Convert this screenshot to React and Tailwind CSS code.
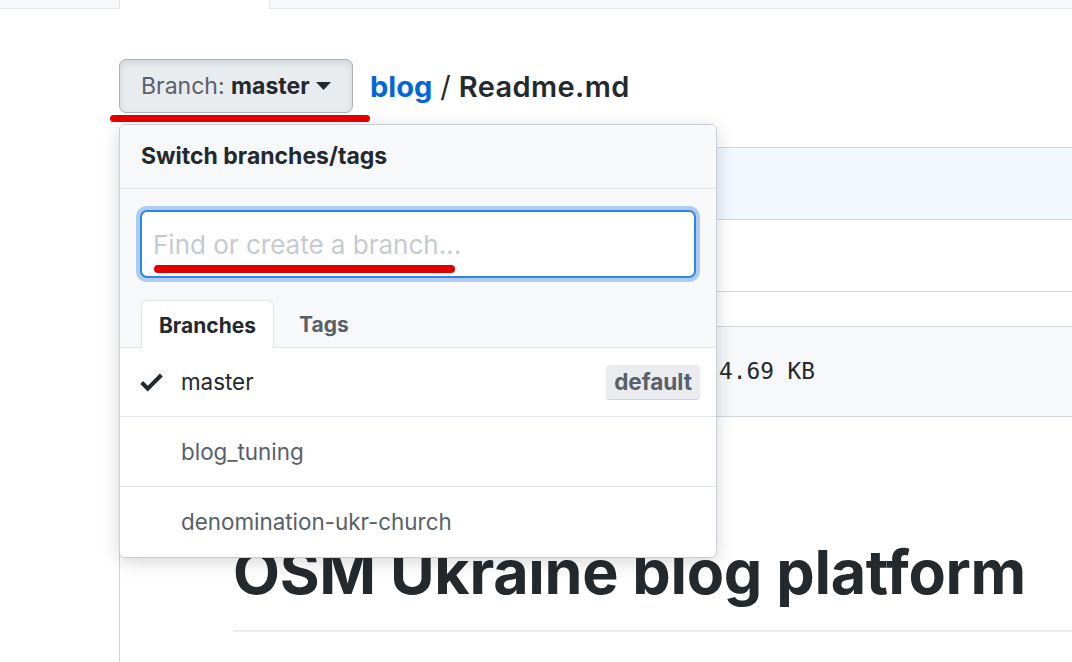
import React from "react";

function Caret() {
  return (
    <svg width="15" height="8" viewBox="0 0 15 8" className="ml-[6px]">
      <path d="M0 0h15L7.5 8z" fill="#24292e" />
    </svg>
  );
}

function Check() {
  return (
    <svg width="23" height="30" viewBox="0 0 12 16">
      <path d="M12 5l-8 8-4-4 1.5-1.5L4 10l6.5-6.5L12 5z" fill="#24292e" />
    </svg>
  );
}

export default function App() {
  const sans = "font-['Inter','Liberation_Sans',sans-serif]";
  return (
    <div className={`relative w-[1072px] h-[662px] overflow-hidden bg-white ${sans}`}>
      {/* top tab strip */}
      <div className="flex h-[9px]">
        <div className="w-[120px] bg-[#f6f8fa] border-b border-r border-[#e1e4e8]" />
        <div className="w-[149px]" />
        <div className="flex-1 bg-[#f6f8fa] border-b border-l border-[#e1e4e8]" />
      </div>

      {/* main column */}
      <div className="ml-[119px]">
        <div className="mt-[50px] flex items-center h-[54px]">
          <div className="flex items-center h-[54px] w-[234px] px-[21px] rounded-[7px] border border-[#aeb2b6] bg-[#e9ecef] shadow-[inset_0_3px_6px_rgba(27,31,35,0.12)] text-[23px]">
            <span className="text-[#586069]">Branch:&nbsp;</span>
            <span className="font-bold text-[#24292e]">master</span>
            <Caret />
          </div>
          <div className="ml-[17px] text-[29px] leading-none">
            <span className="font-bold text-[#0366d6]">blog</span>
            <span className="text-[#24292e] mx-[8px]">/</span>
            <span className="font-semibold text-[#24292e] tracking-[0.4px]">Readme.md</span>
          </div>
        </div>

        {/* commit tease box */}
        <div className="mt-[34px] border-y border-l border-[#d1d5da]">
          <div className="h-[72px] bg-[#f1f8ff] border-b border-[#d1d5da]" />
          <div className="h-[71px] bg-white" />
        </div>

        {/* file box */}
        <div className="mt-[34px] border-t border-l border-[#d1d5da] h-[400px]">
          <div className="h-[90px] bg-[#f6f8fa] border-b border-[#d1d5da] flex items-center pl-[599px] font-['DejaVu_Sans_Mono',monospace] text-[22.8px] text-[#24292e]">
            4.69 KB
          </div>
          <div className="pl-[113px] pt-[117px]">
            <h1 className="text-[61px] font-bold text-[#24292e] leading-[76px] pb-[20px] border-b-2 border-[#eaecef] tracking-[-0.3px]">
              OSM Ukraine blog platform
            </h1>
          </div>
        </div>
      </div>

      {/* dropdown menu */}
      <div className="absolute left-[119px] top-[124px] w-[598px] rounded-[6px] border border-[#c9ced4] bg-white shadow-[0_4px_18px_rgba(27,31,35,0.18)] overflow-hidden">
        <div className="h-[64px] px-[21px] flex items-center bg-[#f6f8fa] border-b border-[#e1e4e8] text-[23px] font-bold text-[#24292e]">
          Switch branches/tags
        </div>
        <div className="bg-[#f6f8fa] pt-[21px]">
          <div className="px-[20px]">
            <div className="h-[68px] rounded-[7px] border-2 border-[#2f86ea] bg-white shadow-[0_0_0_4px_rgba(3,102,214,0.3)] flex items-center px-[11px] text-[26px] text-[#c6cbd1]">
              Find or create a branch...
            </div>
          </div>
          <div className="mt-[22px] flex items-end pl-[21px] border-b border-[#e1e4e8] h-[48px]">
            <div className="h-[48px] w-[133px] -mb-px pt-[3px] bg-white border border-b-0 border-[#e1e4e8] rounded-t-[6px] flex items-center justify-center text-[21px] font-bold text-[#24292e]">
              Branches
            </div>
            <div className="h-[47px] pt-[3px] flex items-center ml-[25px] text-[21px] font-bold text-[#586069]">
              Tags
            </div>
          </div>
        </div>
        <div className="h-[69px] flex items-center pl-[20px] pr-[16px] border-b border-[#e1e4e8] text-[22.4px]">
          <div className="w-[41px] flex items-center">
            <Check />
          </div>
          <span className="text-[#24292e]">master</span>
          <span className="ml-auto h-[35px] px-[8px] flex items-center rounded-[4px] bg-[#eaecef] shadow-[inset_0_-1px_0_rgba(27,31,35,0.12)] text-[22.5px] font-bold text-[#586069]">
            default
          </span>
        </div>
        <div className="h-[70px] flex items-center pl-[61px] border-b border-[#e1e4e8] text-[22.4px] text-[#586069]">
          blog_tuning
        </div>
        <div className="h-[70px] flex items-center pl-[61px] text-[22.4px] text-[#586069]">
          denomination-ukr-church
        </div>
      </div>

      {/* red annotation marks */}
      <div className="absolute left-[110px] top-[115px] w-[260px] h-[7px] rounded-full bg-[#e10000]" />
      <div className="absolute left-[154px] top-[265px] w-[301px] h-[8px] rounded-full bg-[#e10000]" />
    </div>
  );
}
